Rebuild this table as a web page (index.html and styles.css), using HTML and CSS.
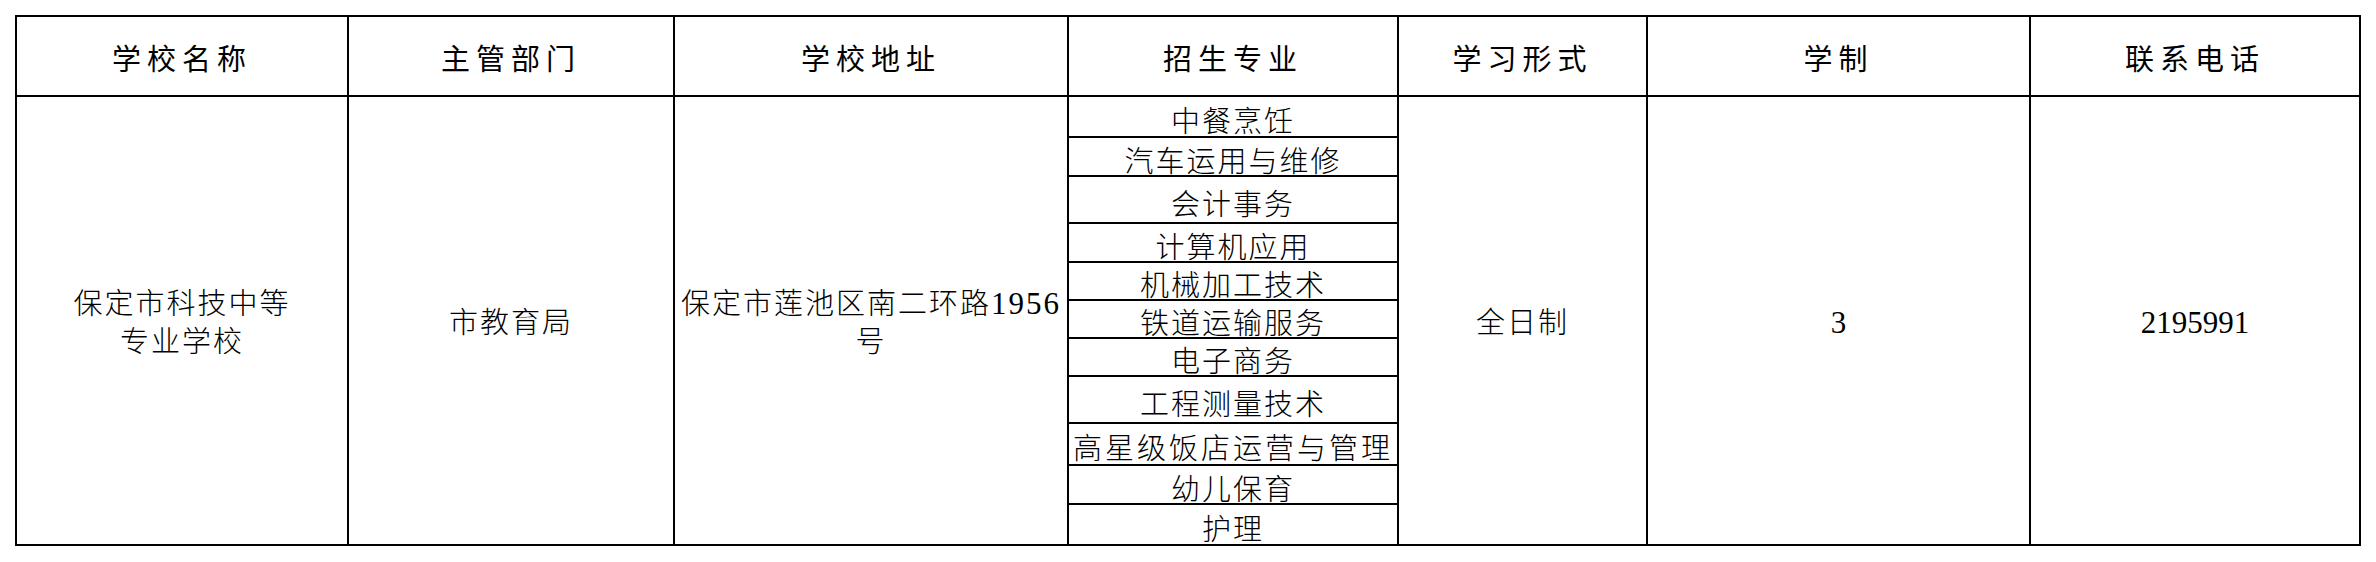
FILE: index.html
```html
<!DOCTYPE html>
<html lang="zh-CN">
<head>
<meta charset="utf-8">
<title>学校信息</title>
<link rel="stylesheet" href="styles.css">
</head>
<body>
<div class="sheet">
  <div class="cell head">学校名称</div>
  <div class="cell head">主管部门</div>
  <div class="cell head">学校地址</div>
  <div class="cell head">招生专业</div>
  <div class="cell head">学习形式</div>
  <div class="cell head">学制</div>
  <div class="cell head">联系电话</div>

  <div class="cell body"><div class="lines">保定市科技中等<br>专业学校</div></div>
  <div class="cell body"><div class="lines">市教育局</div></div>
  <div class="cell body"><div class="lines addr">保定市莲池区南二环路<span class="digits">1956</span><br>号</div></div>
  <div class="majors">
    <div class="major r39">中餐烹饪</div>
    <div class="major r37">汽车运用与维修</div>
    <div class="major r45">会计事务</div>
    <div class="major r37">计算机应用</div>
    <div class="major r36">机械加工技术</div>
    <div class="major r36">铁道运输服务</div>
    <div class="major r36">电子商务</div>
    <div class="major r45">工程测量技术</div>
    <div class="major r40 wide">高星级饭店运营与管理</div>
    <div class="major r37">幼儿保育</div>
    <div class="major r39">护理</div>
  </div>
  <div class="cell body"><div class="lines">全日制</div></div>
  <div class="cell body num"><div class="lines">3</div></div>
  <div class="cell body num"><div class="lines">2195991</div></div>
</div>
</body>
</html>
```

FILE: styles.css
```css
html, body {
  margin: 0;
  padding: 0;
  background: #ffffff;
}

body {
  font-family: "Liberation Serif", "Noto Sans CJK SC", serif;
  color: #000000;
}

.sheet {
  margin: 15px 0 0 15px;
  display: grid;
  grid-template-columns: 330px 324px 392px 328px 247px 381px 328px;
  grid-template-rows: 78px 447px;
  gap: 2px;
  padding: 2px;
  background: #000000;
  width: max-content;
}

.cell {
  background: #ffffff;
  display: flex;
  align-items: center;
  justify-content: center;
  text-align: center;
}

.head {
  font-size: 29px;
  letter-spacing: 6px;
  font-weight: 400;
  padding-top: 2px;
  box-sizing: border-box;
}

.body {
  font-size: 29px;
  letter-spacing: 2px;
  line-height: 38px;
  font-weight: 300;
  padding-top: 4px;
  box-sizing: border-box;
}

.lines {
  text-align: center;
}

.addr {
  white-space: nowrap;
}

.num {
  font-size: 31px;
  letter-spacing: 0;
}

.digits {
  font-size: 31px;
  letter-spacing: 2px;
}

.majors {
  display: flex;
  flex-direction: column;
  gap: 2px;
  background: #000000;
}

.major {
  background: #ffffff;
  display: flex;
  align-items: center;
  justify-content: center;
  font-size: 29px;
  letter-spacing: 2px;
  font-weight: 300;
  padding-top: 4px;
  box-sizing: border-box;
}

.major.wide {
  letter-spacing: 3px;
}

.r36 { height: 36px; }
.r37 { height: 37px; }
.r39 { height: 39px; }
.r40 { height: 40px; }
.r45 { height: 45px; }
```
